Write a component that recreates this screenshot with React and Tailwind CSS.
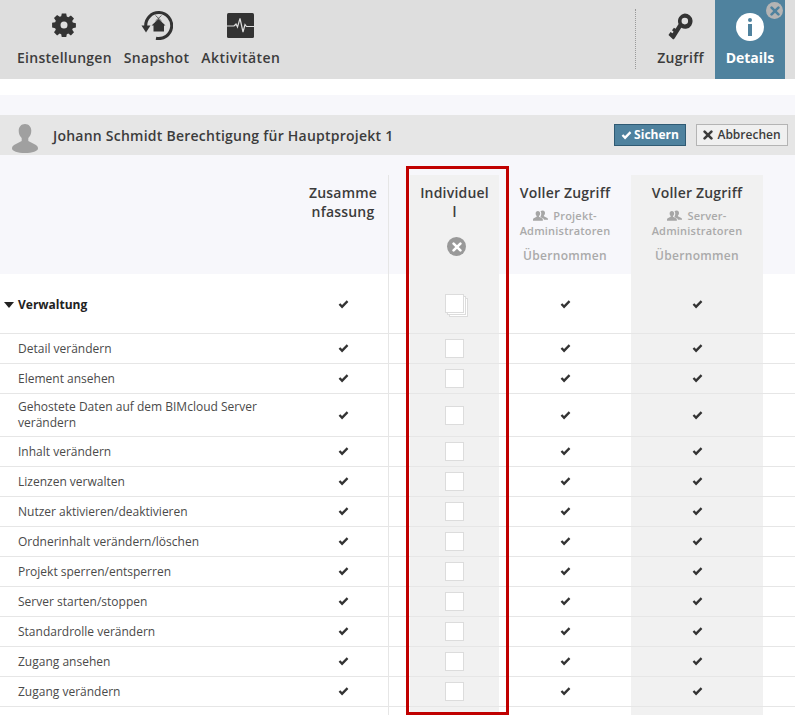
import React from "react";

const Check = ({ className = "" }) => (
  <svg viewBox="0 0 12 10" className={`w-[11px] h-[9px] ${className}`}>
    <path d="M0.6 5.4 L2.4 3.6 L4.4 5.6 L9.6 0.4 L11.4 2.2 L4.4 9.4 Z" fill="currentColor" />
  </svg>
);
const Times = ({ className = "" }) => (
  <svg viewBox="0 0 10 10" className={className}>
    <path d="M1.6 1.6 L8.4 8.4 M8.4 1.6 L1.6 8.4" stroke="currentColor" strokeWidth="2.6" strokeLinecap="round" fill="none" />
  </svg>
);
const Users = () => (
  <svg viewBox="0 0 16 12" className="w-[15px] h-[12px] text-[#a6a6a6] shrink-0">
    <path d="M5.2 0.6c1.5 0 2.4 1.2 2.4 2.8 0 1.1-.5 2.2-1.2 2.7v.8l3.2 1.5c.6.3.9.7.9 1.3V11H0V9.7c0-.6.3-1 .8-1.2l3.1-1.6v-.8C3.300 5.600 2.800 4.500 2.800 3.400 2.800 1.800 3.700.6 5.200.6Z" fill="currentColor" />
    <path d="M10.400 0c1.500 0 2.400 1.200 2.400 2.800 0 1.100-.5 2.200-1.200 2.700v.8l3.600 1.700c.5.2.8.6.8 1.100V10h-4.300c-.1-.8-.6-1.400-1.300-1.700L8 7.300V6.400c.5-.7.800-1.700.800-2.800C8.800 2.400 8.500 1.400 8 .900 8.500.300 9.400 0 10.400 0Z" fill="currentColor" />
  </svg>
);

const ToolBtn = ({ icon, label, track = "tracking-[0.27px]" }) => (
  <div className="flex flex-col items-center">
    <div className="h-[40px] flex items-center justify-center">{icon}</div>
    <div className={`text-[14px] leading-[19px] font-semibold mt-[3px] text-[#3c3c3c] ${track}`}>{label}</div>
  </div>
);

const Gear = () => (
  <svg viewBox="0 0 24 24" className="w-[24px] h-[24px] text-[#333333]">
    <path
      fill="currentColor"
      fillRule="evenodd"
      d="M9.800 0.500h4.400l.6 3.100 1.500.6 2.600-1.800 3.100 3.100-1.800 2.600.6 1.500 3.100.6v4.400l-3.100.6-.6 1.500 1.800 2.600-3.100 3.100-2.600-1.800-1.500.6-.6 3.100H9.800l-.6-3.100-1.500-.6-2.600 1.800-3.100-3.100 1.800-2.600-.6-1.500-3.100-.6V9.800l3.100-.6.6-1.500-1.800-2.600 3.100-3.100 2.600 1.800 1.500-.6ZM12 8.500a3.500 3.500 0 1 0 0 7 3.500 3.500 0 0 0 0-7Z"
    />
  </svg>
);
const Snapshot = () => (
  <svg viewBox="0 0 32 30" className="w-[32px] h-[30px] text-[#333333]">
    <path d="M4.700 16 A13 13 0 1 1 15 28.300" fill="none" stroke="currentColor" strokeWidth="3" />
    <path d="M0.500 15.500 H9.500 L5 22.500 Z" fill="currentColor" />
    <path d="M17.500 9 L24.500 15.500 H23 V21.500 H12.500 V15.500 H10.500 Z" fill="currentColor" />
    <path d="M14.500 5.500 L20.500 11 M20.500 5.500 L14.500 11" stroke="currentColor" strokeWidth="0.700" />
  </svg>
);
const Activity = () => (
  <svg viewBox="0 0 27 25" className="w-[27px] h-[25px]">
    <rect width="27" height="25" rx="1.500" fill="#333333" />
    <path d="M0 13 H7 L9 11 L10.500 14 L13 5.500 L16 19 L18 11.500 L19.500 13.500 H27" fill="none" stroke="#dedede" strokeWidth="1.200" />
  </svg>
);
const Key = () => (
  <svg viewBox="0 0 26 28" className="w-[25px] h-[27px] mt-[3px] text-[#333333]">
    <path
      fill="currentColor"
      fillRule="evenodd"
      d="M17.500 0.500a8 8 0 0 1 2.200 15.700 8 8 0 0 1-5.900-.9L6.800 26.600 5.400 27.500 0.500 22.800 2.600 19.800 4.700 21 5.800 19.500 4.200 18 6.200 15.200 7.900 16.300 11 11.500a8 8 0 0 1 6.500-11ZM17.500 5a3.400 3.400 0 1 0 0 6.800 3.400 3.400 0 0 0 0-6.800Z"
    />
  </svg>
);
const Person = () => (
  <svg viewBox="0 0 26 29" className="w-[26px] h-[29px] text-[#a0a0a0]">
    <path
      fill="currentColor"
      d="M13 0c3.800 0 6.300 2.800 6.300 6.800 0 3-1.200 5.700-3 7.200v3l7.200 3.800c1.500.8 2.500 2 2.500 3.700 0 2.400-5.700 4.500-13 4.500S0 26.900 0 24.500c0-1.700 1-2.900 2.500-3.700L9.700 17v-3c-1.800-1.500-3-4.200-3-7.200C6.700 2.800 9.200 0 13 0Z"
    />
  </svg>
);

const Mark = () => (
  <div className="text-[#333333] flex items-center justify-center">
    <Check />
  </div>
);

const Box = () => <div className="w-[19px] h-[19px] bg-white border border-[#dcdcdc]" />;
const StackBox = () => (
  <div className="relative w-[23px] h-[23px] ml-[4px] mt-[1px]">
    <div className="absolute left-[4px] top-[4px] w-[19px] h-[19px] bg-white border border-[#dcdcdc]" />
    <div className="absolute left-[2px] top-[2px] w-[19px] h-[19px] bg-white border border-[#dcdcdc]" />
    <div className="absolute left-0 top-0 w-[19px] h-[19px] bg-white border border-[#dcdcdc]" />
  </div>
);

const Row = ({ label, h = "h-[30px]", group = false }) => {
  const pad = group ? "pt-[2px]" : "";
  return (
    <div className={`flex items-stretch border-b border-[#e6e6e6] ${h}`}>
      <div className={`w-[298px] flex items-center ${pad} ${group ? "pl-[4px] font-bold text-[#222222]" : "pl-[18px] text-[#4a4a4a]"} text-[12px] leading-[16px] pr-[20px]`}>
        {group && (
          <svg viewBox="0 0 10 6" className="w-[10px] h-[6px] mr-[4px] shrink-0 text-[#222222]">
            <path d="M0 0 H10 L5 6 Z" fill="currentColor" />
          </svg>
        )}
        <span>{label}</span>
      </div>
      <div className={`w-[91px] border-r border-[#e6e6e6] flex items-center justify-center ${pad}`}>
        <Mark />
      </div>
      <div className="w-[21px]" />
      <div className={`w-[89px] bg-[#f1f1f1] flex items-center justify-center ${pad}`}>
        {group ? <StackBox /> : <Box />}
      </div>
      <div className={`w-[132px] flex items-center justify-center ${pad}`}>
        <Mark />
      </div>
      <div className={`w-[132px] bg-[#f1f1f1] flex items-center justify-center ${pad}`}>
        <Mark />
      </div>
    </div>
  );
};

const HeadTitle = ({ children }) => (
  <div className="text-[14px] leading-[19px] font-semibold text-[#3c3c3c] text-center tracking-[0.2px]">{children}</div>
);

const Inherit = ({ first }) => (
  <div className="flex flex-col items-center pt-[8px]">
    <HeadTitle>Voller Zugriff</HeadTitle>
    <div className="mt-[6px] text-[11px] leading-[15px] font-semibold text-[#aaaaaa] text-center tracking-[0.2px]">
      <div className="flex items-center justify-center gap-[5px]">
        <Users />
        <span>{first}</span>
      </div>
      <div>Administratoren</div>
    </div>
    <div className="mt-[10px] text-[12px] leading-[16px] font-semibold text-[#aaaaaa] tracking-[0.3px]">Übernommen</div>
  </div>
);

const rows = [
  ["Detail verändern"],
  ["Element ansehen"],
  ["Gehostete Daten auf dem BIMcloud Server verändern", "h-[43px]"],
  ["Inhalt verändern"],
  ["Lizenzen verwalten"],
  ["Nutzer aktivieren/deaktivieren"],
  ["Ordnerinhalt verändern/löschen"],
  ["Projekt sperren/entsperren"],
  ["Server starten/stoppen"],
  ["Standardrolle verändern"],
  ["Zugang ansehen"],
  ["Zugang verändern"],
];

export default function App() {
  return (
    <div className="relative w-[795px] h-[715px] overflow-hidden bg-white font-['Open_Sans',sans-serif]">
      <div className="h-[79px] bg-[#dedede] flex justify-between">
        <div className="flex pl-[17px] pt-[5px] gap-[12px]">
          <ToolBtn icon={<Gear />} label="Einstellungen" />
          <ToolBtn icon={<Snapshot />} label="Snapshot" />
          <ToolBtn icon={<Activity />} label="Aktivitäten" track="tracking-[0.45px]" />
        </div>
        <div className="flex mr-[10px]">
          <div className="mt-[9px] h-[60px] border-l border-dotted border-[#999999]" />
          <div className="w-[79px] pt-[5px] pl-[10px] flex justify-center">
            <ToolBtn icon={<Key />} label="Zugriff" />
          </div>
          <div className="relative w-[70px] bg-[#4f829e] pt-[5px] flex justify-center">
            <div className="flex flex-col items-center">
              <div className="h-[40px] flex items-center justify-center">
                <div className="relative w-[28px] h-[28px] mt-[4px] rounded-full bg-white">
                  <div className="absolute left-[12px] top-[5px] w-[4px] h-[4px] rounded-full bg-[#4f829e]" />
                  <div className="absolute left-[12px] top-[11px] w-[4px] h-[12px] bg-[#4f829e]" />
                </div>
              </div>
              <div className="text-[14px] leading-[19px] font-bold mt-[3px] text-white">Details</div>
            </div>
            <div className="absolute right-[2px] top-[2px] w-[17px] h-[17px] rounded-full bg-[#b4b4b4] flex items-center justify-center text-[#4f829e]">
              <Times className="w-[10px] h-[10px]" />
            </div>
          </div>
        </div>
      </div>

      <div className="h-[16px]" />
      <div className="h-[20px] bg-[#f7f7fb]" />

      <div className="h-[40px] bg-[#e6e6e6] flex items-center pl-[12px] pr-[7px]">
        <div className="mt-[6px]">
          <Person />
        </div>
        <div className="ml-[15px] text-[14px] font-semibold text-[#3c3c3c] tracking-[0.24px] grow">
          Johann Schmidt Berechtigung für Hauptprojekt 1
        </div>
        <button className="h-[22px] w-[72px] bg-[#4f829e] border border-[#2f5a73] text-white text-[12px] font-bold flex items-center justify-center gap-[2px]">
          <Check />
          Sichern
        </button>
        <button className="ml-[10px] h-[22px] w-[92px] bg-[#f0f0f0] border border-[#b4b4b4] text-[#3c3c3c] text-[12px] font-semibold flex items-center justify-center gap-[4px]">
          <Times className="w-[10px] h-[10px]" />
          Abbrechen
        </button>
      </div>

      <div className="h-[119px] bg-[#f7f7fb] flex pt-[20px]">
        <div className="w-[298px]" />
        <div className="w-[91px] border-r border-[#e6e6e6] pt-[8px] flex justify-center">
          <div className="w-[70px] break-all">
            <HeadTitle>Zusammenfassung</HeadTitle>
          </div>
        </div>
        <div className="w-[21px]" />
        <div className="w-[89px] bg-[#f1f1f1] pt-[8px] flex flex-col items-center">
          <div className="w-[72px] break-all">
            <HeadTitle>Individuell</HeadTitle>
          </div>
          <div className="mt-[16px] ml-[4px] w-[19px] h-[19px] rounded-full bg-[#999999] flex items-center justify-center text-white">
            <Times className="w-[10px] h-[10px]" />
          </div>
        </div>
        <div className="w-[132px]">
          <Inherit first="Projekt-" />
        </div>
        <div className="w-[132px] bg-[#f1f1f1]">
          <Inherit first="Server-" />
        </div>
      </div>

      <Row label="Verwaltung" group h="h-[60px]" />
      {rows.map(([label, h]) => (
        <Row key={label} label={label} h={h} />
      ))}
      <div className="flex h-[20px]">
        <div className="w-[298px]" />
        <div className="w-[91px] border-r border-[#e6e6e6]" />
        <div className="w-[21px]" />
        <div className="w-[89px] bg-[#f1f1f1]" />
        <div className="w-[132px]" />
        <div className="w-[132px] bg-[#f1f1f1]" />
      </div>

      <div className="absolute left-[406px] top-[166px] w-[103px] h-[549px] border-[3px] border-[#c00000]" />
    </div>
  );
}
